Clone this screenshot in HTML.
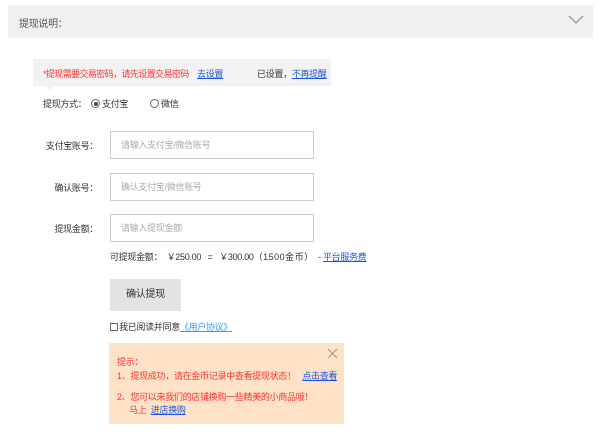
<!DOCTYPE html>
<html><head><meta charset="utf-8"><style>
*{margin:0;padding:0;box-sizing:border-box}
body{width:600px;height:442px;background:#fff;font-family:"Liberation Sans","Noto Sans CJK SC",sans-serif;font-size:9px;letter-spacing:-0.3px;color:#333;position:relative;overflow:hidden}
.a{position:absolute;white-space:nowrap}
.hd{left:8px;top:5px;width:585px;height:33px;background:#f0f0f0}
.lk{color:#1a55e0;text-decoration:underline}
.inp{position:absolute;left:110px;width:204px;height:28px;border:1px solid #ccc;color:#aaa;padding-left:10px;line-height:26px}
.lbl{position:absolute;right:502px;text-align:right}
.r{display:inline-block;width:9px;height:9px;border:1px solid #666;border-radius:50%;vertical-align:-1px;margin-right:2px;position:relative}
.r.on:after{content:"";position:absolute;left:1.5px;top:1.5px;width:4px;height:4px;border-radius:50%;background:#444}
</style></head><body>
<div class="a hd"></div>
<div class="a" style="left:19px;top:15px;font-size:10px;color:#555">提现说明：</div>
<svg class="a" style="left:568px;top:15px" width="16" height="10"><path d="M1 1 L8 8 L15 1" fill="none" stroke="#999" stroke-width="1.3"/></svg>
<div class="a" style="left:33px;top:59px;width:298px;height:27px;background:#f2f2f2"></div>
<div class="a" style="left:46px;top:86px;width:0;height:0;border-left:4px solid transparent;border-right:4px solid transparent;border-top:6px solid #f2f2f2"></div>
<div class="a" style="left:43px;top:67px;color:#f33;letter-spacing:-0.6px">*提现需要交易密码，请先设置交易密码</div>
<div class="a lk" style="left:197px;top:67px">去设置</div>
<div class="a" style="left:257px;top:67px">已设置，<span class="lk">不再提醒</span></div>
<div class="a" style="left:43px;top:97px">提现方式：</div>
<div class="a" style="left:91px;top:97px"><span class="r on"></span>支付宝</div>
<div class="a" style="left:150px;top:97px"><span class="r"></span>微信</div>
<div class="lbl" style="top:139px">支付宝账号：</div>
<div class="lbl" style="top:181px">确认账号：</div>
<div class="lbl" style="top:222px">提现金额：</div>
<div class="inp" style="top:131px">请输入支付宝/微信账号</div>
<div class="inp" style="top:173px">确认支付宝/微信账号</div>
<div class="inp" style="top:214px">请输入提现金额</div>
<div class="a" style="left:110px;top:250px">可提现金额：&nbsp; ￥250.00 &nbsp; = &nbsp; ￥300.00<span style="letter-spacing:0.5px">（1500金币）</span> &nbsp;- <span class="lk">平台服务费</span></div>
<div class="a" style="left:110px;top:279px;width:71px;height:32px;background:#e3e3e3;text-align:center;line-height:32px;font-size:10px">确认提现</div>
<div class="a" style="left:110px;top:320px"><span style="display:inline-block;width:8px;height:8px;border:1px solid #666;vertical-align:-1px;margin-right:1px"></span>我已阅读并同意<span style="color:#39f;text-decoration:underline">《用户协议》</span></div>
<div class="a" style="left:109px;top:343px;width:235px;height:81px;background:#fde2c8"></div>
<svg class="a" style="left:327px;top:348px" width="11" height="11"><path d="M1 1L10 10M10 1L1 10" stroke="#999" stroke-width="1"/></svg>
<div class="a" style="left:117px;top:355px;color:#f33">提示：</div>
<div class="a" style="left:117px;top:369px;color:#f33">1、提现成功，请在金币记录中查看提现状态！ &nbsp; <span class="lk">点击查看</span></div>
<div class="a" style="left:117px;top:390px;color:#f33">2、您可以来我们的店铺换购一些精美的小商品哦！</div>
<div class="a" style="left:129px;top:403px;color:#f33">马上 &nbsp;<span class="lk">进店换购</span></div>
</body></html>
